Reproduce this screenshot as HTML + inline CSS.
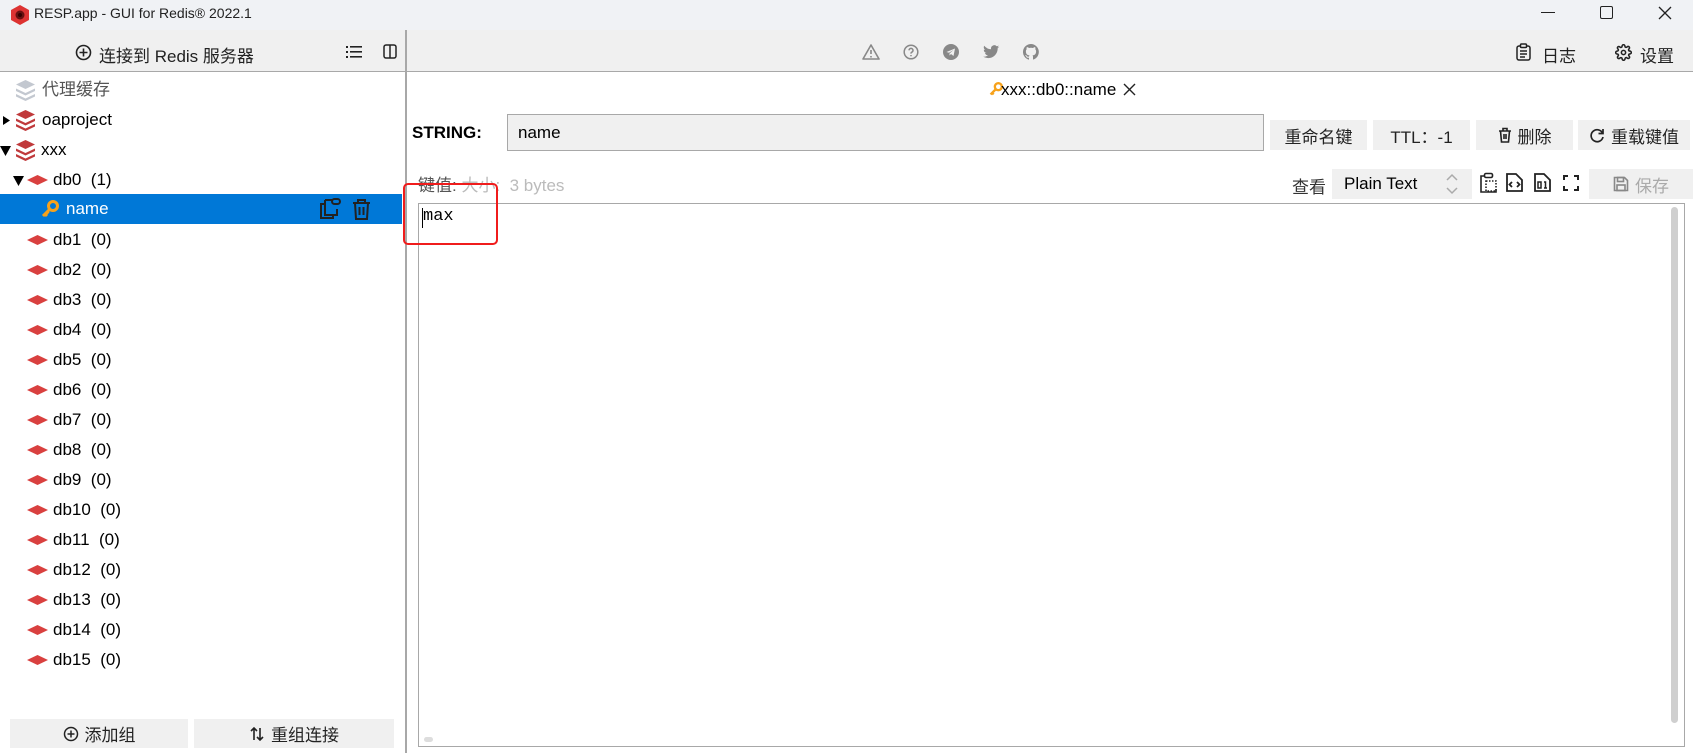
<!DOCTYPE html>
<html><head><meta charset="utf-8">
<style>
*{margin:0;padding:0;box-sizing:border-box}
body{width:1693px;height:753px;overflow:hidden;background:#fff;font-family:"Liberation Sans","Noto Sans CJK SC",sans-serif;color:#000;position:relative}
.a{position:absolute;white-space:nowrap}
.btn{position:absolute;background:#f0f0f0;font-size:17px;color:#222;display:flex;align-items:center;justify-content:center;gap:6px}
.row{position:absolute;left:0;height:30px;width:403px;font-size:17px;line-height:30px}
.gray{color:#777}
</style></head><body>
<!-- title bar -->
<div class="a" style="left:0;top:0;width:1693px;height:30px;background:#f0f2f5"></div>
<svg class="a" style="left:10px;top:4px" width="20" height="22" viewBox="0 0 20 22"><polygon points="10,1 19,6 19,16 10,21 1,16 1,6" fill="#d33"/><circle cx="10" cy="11" r="4.5" fill="#611"/><circle cx="10" cy="11" r="2" fill="#300"/></svg>
<div class="a" style="left:34px;top:5px;font-size:14px;color:#222">RESP.app - GUI for Redis® 2022.1</div>
<div class="a" style="left:1541px;top:12px;width:14px;height:1px;background:#222"></div>
<div class="a" style="left:1600px;top:6px;width:13px;height:13px;border:1.3px solid #222;border-radius:2px"></div>
<svg class="a" style="left:1658px;top:6px" width="14" height="14"><path d="M1 1L13 13M13 1L1 13" stroke="#222" stroke-width="1.3"/></svg>
<!-- toolbar -->
<div class="a" style="left:0;top:30px;width:1693px;height:42px;background:#f0f0f0;border-bottom:1.5px solid #a8a8a8"></div>
<div class="a" style="left:405px;top:30px;width:1.5px;height:723px;background:#a8a8a8"></div>
<svg class="a" style="left:75px;top:44px" width="17" height="17"><circle cx="8.5" cy="8.5" r="7" fill="none" stroke="#222" stroke-width="1.6"/><path d="M8.5 4.5v8M4.5 8.5h8" stroke="#222" stroke-width="1.6"/></svg>
<div class="a" style="left:99px;top:42px;font-size:17px;color:#222">连接到 Redis 服务器</div>
<svg class="a" style="left:346px;top:45px" width="17" height="14"><g fill="#222"><rect x="0" y="1" width="2" height="2"/><rect x="0" y="6" width="2" height="2"/><rect x="0" y="11" width="2" height="2"/><rect x="4" y="1" width="12" height="1.6"/><rect x="4" y="6" width="12" height="1.6"/><rect x="4" y="11" width="12" height="1.6"/></g></svg>
<svg class="a" style="left:383px;top:44px" width="14" height="15"><rect x="1" y="1" width="12" height="13" rx="2" fill="none" stroke="#222" stroke-width="1.5"/><path d="M7 1v13" stroke="#222" stroke-width="1.5"/></svg>
<!-- center icons -->
<svg class="a" style="left:862px;top:43px" width="18" height="17" fill="none" stroke="#888" stroke-width="1.6"><path d="M9 2L17 16H1Z" stroke-linejoin="round"/><path d="M9 7v4M9 13v1.5"/></svg>
<svg class="a" style="left:903px;top:44px" width="16" height="16" fill="none" stroke="#888" stroke-width="1.5"><circle cx="8" cy="8" r="6.8"/><path d="M6 6.3a2 2 0 1 1 2.5 2c-.5.2-.5.6-.5 1.3M8 11v1.3"/></svg>
<svg class="a" style="left:943px;top:44px" width="16" height="16"><circle cx="8" cy="8" r="8" fill="#888"/><path d="M3.5 8L12 4.5 10.5 12 8 10 6.5 11.5V9.5L10.5 6 6 8.8Z" fill="#f0f0f0"/></svg>
<svg class="a" style="left:983px;top:45px" width="17" height="14" viewBox="0 0 24 20"><path d="M23 2.5a9 9 0 0 1-2.7.8A4.7 4.7 0 0 0 22.4.7a9.4 9.4 0 0 1-3 1.1A4.7 4.7 0 0 0 11.4 6 13.4 13.4 0 0 1 1.6 1a4.7 4.7 0 0 0 1.5 6.3A4.7 4.7 0 0 1 1 6.7a4.7 4.7 0 0 0 3.8 4.6 4.7 4.7 0 0 1-2.1.1 4.7 4.7 0 0 0 4.4 3.3A9.5 9.5 0 0 1 0 16.6 13.4 13.4 0 0 0 7.3 18.7c8.7 0 13.5-7.2 13.5-13.5v-.6A9.6 9.6 0 0 0 23 2.5z" fill="#888"/></svg>
<svg class="a" style="left:1023px;top:44px" width="16" height="16" viewBox="0 0 16 16"><path d="M8 0a8 8 0 0 0-2.5 15.6c.4 0 .5-.2.5-.4v-1.5c-2.2.5-2.7-1-2.7-1-.4-.9-.9-1.2-.9-1.2-.7-.5.1-.5.1-.5.8.1 1.2.8 1.2.8.7 1.3 1.9.9 2.3.7.1-.5.3-.9.5-1.1-1.8-.2-3.6-.9-3.6-4 0-.9.3-1.6.8-2.1-.1-.2-.4-1 .1-2.1 0 0 .7-.2 2.2.8a7.5 7.5 0 0 1 4 0c1.5-1 2.2-.8 2.2-.8.4 1.1.2 1.9.1 2.1.5.6.8 1.3.8 2.1 0 3.1-1.9 3.8-3.6 4 .3.3.5.8.5 1.5v2.2c0 .2.1.5.6.4A8 8 0 0 0 8 0z" fill="#888"/></svg>
<svg class="a" style="left:1516px;top:43px" width="15" height="18" fill="none" stroke="#222" stroke-width="1.5"><rect x="1" y="3" width="13" height="14" rx="2"/><rect x="4.5" y="1" width="6" height="3.5" rx="1" fill="#f0f0f0"/><path d="M4 8h7M4 11h7M4 14h5"/></svg>
<div class="a" style="left:1542px;top:42px;font-size:17px;color:#222">日志</div>
<svg class="a" style="left:1615px;top:44px" width="17" height="17" viewBox="0 0 24 24" fill="none" stroke="#222" stroke-width="2.2"><circle cx="12" cy="12" r="3"/><path d="M19.4 15a1.7 1.7 0 0 0 .3 1.8l.1.1a2 2 0 1 1-2.8 2.8l-.1-.1a1.7 1.7 0 0 0-1.8-.3 1.7 1.7 0 0 0-1 1.5V21a2 2 0 1 1-4 0v-.1a1.7 1.7 0 0 0-1.1-1.5 1.7 1.7 0 0 0-1.8.3l-.1.1a2 2 0 1 1-2.8-2.8l.1-.1a1.7 1.7 0 0 0 .3-1.8 1.7 1.7 0 0 0-1.5-1H3a2 2 0 1 1 0-4h.1a1.7 1.7 0 0 0 1.5-1.1 1.7 1.7 0 0 0-.3-1.8l-.1-.1a2 2 0 1 1 2.8-2.8l.1.1a1.7 1.7 0 0 0 1.8.3H9a1.7 1.7 0 0 0 1-1.5V3a2 2 0 1 1 4 0v.1a1.7 1.7 0 0 0 1 1.5 1.7 1.7 0 0 0 1.8-.3l.1-.1a2 2 0 1 1 2.8 2.8l-.1.1a1.7 1.7 0 0 0-.3 1.8V9a1.7 1.7 0 0 0 1.5 1H21a2 2 0 1 1 0 4h-.1a1.7 1.7 0 0 0-1.5 1z"/></svg>
<div class="a" style="left:1640px;top:42px;font-size:17px;color:#222">设置</div>

<!-- tree -->
<svg width="0" height="0" style="position:absolute"><defs>
<g id="stk"><path d="M10.5 1L20 5.5 10.5 10 1 5.5Z"/><path d="M1 9.5l9.5 4.5 9.5-4.5v2.5L10.5 16.5 1 12Z"/><path d="M1 15l9.5 4.5L20 15v2.5L10.5 22 1 17.5Z"/></g>
<g id="db"><path d="M10.5 0L21 5 10.5 10 0 5Z"/></g>
</defs></svg>
<div class="row" style="top:75px"><svg class="a" style="left:15px;top:4px" width="21" height="22" fill="#c3c8d0"><use href="#stk"/></svg><span class="a gray" style="left:42px;color:#555">代理缓存</span></div>
<div class="row" style="top:105px"><svg class="a" style="left:3px;top:11px" width="8" height="9"><path d="M0 0L7 4.5 0 9Z"/></svg><svg class="a" style="left:15px;top:4px" width="21" height="22" fill="#c0393b"><use href="#stk"/></svg><span class="a" style="left:42px">oaproject</span></div>
<div class="row" style="top:135px"><svg class="a" style="left:0;top:11px" width="11" height="10"><path d="M0 0H11L5.5 10Z"/></svg><svg class="a" style="left:15px;top:4px" width="21" height="22" fill="#c0393b"><use href="#stk"/></svg><span class="a" style="left:41px">xxx</span></div>
<div class="row" style="top:165px"><svg class="a" style="left:13px;top:11px" width="11" height="10"><path d="M0 0H11L5.5 10Z"/></svg><svg class="a" style="left:27px;top:10px" width="21" height="10" fill="#d9403f"><use href="#db"/></svg><span class="a" style="left:53px">db0&nbsp; (1)</span></div>
<div class="row" style="top:194px;height:30px;background:#0078d7;width:402px"><svg class="a" style="left:41px;top:6px" width="18" height="18" viewBox="0 0 18 18"><circle cx="12" cy="6" r="4.5" fill="none" stroke="#f7a21b" stroke-width="3"/><path d="M9 9L2 16M4 14l2 2M6 12l1.5 1.5" stroke="#f7a21b" stroke-width="3"/></svg><span class="a" style="left:66px;top:0;color:#fff">name</span>
<svg class="a" style="left:318px;top:4px" width="24" height="22" fill="none" stroke="#222" stroke-width="2"><path d="M7 6H3v14h12v-3"/><path d="M7 2h8M7 2v15h12v-6"/><rect x="14" y="1" width="8" height="5" rx="2.5"/></svg>
<svg class="a" style="left:352px;top:4px" width="19" height="22" fill="none" stroke="#222" stroke-width="2"><path d="M1 5h17M6 5V2h7v3M3 5l1 16h11l1-16M7.5 9v8M11.5 9v8"/></svg></div>
<div id="dbs"></div>
<script>
var h='';for(var i=1;i<=15;i++){var t=180+i*30-15+ (i>=1?30:0);}
</script>
<div class="row" style="top:225px"><svg class="a" style="left:27px;top:10px" width="21" height="10" fill="#d9403f"><use href="#db"/></svg><span class="a" style="left:53px">db1&nbsp; (0)</span></div>
<div class="row" style="top:255px"><svg class="a" style="left:27px;top:10px" width="21" height="10" fill="#d9403f"><use href="#db"/></svg><span class="a" style="left:53px">db2&nbsp; (0)</span></div>
<div class="row" style="top:285px"><svg class="a" style="left:27px;top:10px" width="21" height="10" fill="#d9403f"><use href="#db"/></svg><span class="a" style="left:53px">db3&nbsp; (0)</span></div>
<div class="row" style="top:315px"><svg class="a" style="left:27px;top:10px" width="21" height="10" fill="#d9403f"><use href="#db"/></svg><span class="a" style="left:53px">db4&nbsp; (0)</span></div>
<div class="row" style="top:345px"><svg class="a" style="left:27px;top:10px" width="21" height="10" fill="#d9403f"><use href="#db"/></svg><span class="a" style="left:53px">db5&nbsp; (0)</span></div>
<div class="row" style="top:375px"><svg class="a" style="left:27px;top:10px" width="21" height="10" fill="#d9403f"><use href="#db"/></svg><span class="a" style="left:53px">db6&nbsp; (0)</span></div>
<div class="row" style="top:405px"><svg class="a" style="left:27px;top:10px" width="21" height="10" fill="#d9403f"><use href="#db"/></svg><span class="a" style="left:53px">db7&nbsp; (0)</span></div>
<div class="row" style="top:435px"><svg class="a" style="left:27px;top:10px" width="21" height="10" fill="#d9403f"><use href="#db"/></svg><span class="a" style="left:53px">db8&nbsp; (0)</span></div>
<div class="row" style="top:465px"><svg class="a" style="left:27px;top:10px" width="21" height="10" fill="#d9403f"><use href="#db"/></svg><span class="a" style="left:53px">db9&nbsp; (0)</span></div>
<div class="row" style="top:495px"><svg class="a" style="left:27px;top:10px" width="21" height="10" fill="#d9403f"><use href="#db"/></svg><span class="a" style="left:53px">db10&nbsp; (0)</span></div>
<div class="row" style="top:525px"><svg class="a" style="left:27px;top:10px" width="21" height="10" fill="#d9403f"><use href="#db"/></svg><span class="a" style="left:53px">db11&nbsp; (0)</span></div>
<div class="row" style="top:555px"><svg class="a" style="left:27px;top:10px" width="21" height="10" fill="#d9403f"><use href="#db"/></svg><span class="a" style="left:53px">db12&nbsp; (0)</span></div>
<div class="row" style="top:585px"><svg class="a" style="left:27px;top:10px" width="21" height="10" fill="#d9403f"><use href="#db"/></svg><span class="a" style="left:53px">db13&nbsp; (0)</span></div>
<div class="row" style="top:615px"><svg class="a" style="left:27px;top:10px" width="21" height="10" fill="#d9403f"><use href="#db"/></svg><span class="a" style="left:53px">db14&nbsp; (0)</span></div>
<div class="row" style="top:645px"><svg class="a" style="left:27px;top:10px" width="21" height="10" fill="#d9403f"><use href="#db"/></svg><span class="a" style="left:53px">db15&nbsp; (0)</span></div>

<div class="btn" style="left:10px;top:719px;width:178px;height:29px"><svg width="16" height="16"><circle cx="8" cy="8" r="6.5" fill="none" stroke="#222" stroke-width="1.5"/><path d="M8 4.5v7M4.5 8h7" stroke="#222" stroke-width="1.5"/></svg>添加组</div>
<div class="btn" style="left:194px;top:719px;width:200px;height:29px"><svg width="16" height="16" fill="none" stroke="#222" stroke-width="1.6"><path d="M5 14V2M2 5l3-3 3 3M11 2v12M8 11l3 3 3-3"/></svg>重组连接</div>

<!-- right panel -->
<svg class="a" style="left:989px;top:82px" width="14" height="14" viewBox="0 0 18 18"><circle cx="12" cy="6" r="4.5" fill="none" stroke="#f7a21b" stroke-width="3"/><path d="M9 9L2 16M4 14l2 2" stroke="#f7a21b" stroke-width="3"/></svg>
<div class="a" style="left:1001px;top:80px;font-size:17px">xxx::db0::name</div>
<svg class="a" style="left:1123px;top:83px" width="13" height="13"><path d="M1 1L12 12M12 1L1 12" stroke="#222" stroke-width="1.4"/></svg>

<div class="a" style="left:412px;top:123px;font-size:17px;font-weight:bold">STRING:</div>
<div class="a" style="left:507px;top:114px;width:757px;height:37px;background:#f0f0f0;border:1px solid #a8a8a8;font-size:17px;line-height:35px;padding-left:10px">name</div>
<div class="btn" style="left:1270px;top:120px;width:97px;height:30px">重命名键</div>
<div class="btn" style="left:1373px;top:120px;width:97px;height:30px">TTL：-1</div>
<div class="btn" style="left:1476px;top:120px;width:97px;height:30px"><svg width="14" height="16" fill="none" stroke="#222" stroke-width="1.6"><path d="M1 4h12M5 4V1.5h4V4M2.5 4l1 11h7l1-11M6 7v5M8 7v5"/></svg>删除</div>
<div class="btn" style="left:1578px;top:120px;width:112px;height:30px"><svg width="16" height="16" fill="none" stroke="#222" stroke-width="1.7"><path d="M13.5 6A6 6 0 1 0 14 10"/><path d="M14 2v4.5H9.5"/></svg>重载键值</div>

<div class="a" style="left:418px;top:171px;font-size:17px;color:#555">键值: <span style="color:#bbb">大小:&nbsp; 3 bytes</span></div>
<div class="a" style="left:1292px;top:173px;font-size:17px;color:#333">查看</div>
<div class="a" style="left:1332px;top:169px;width:140px;height:30px;background:#f0f0f0;font-size:17px;line-height:30px;padding-left:12px">Plain Text</div>
<svg class="a" style="left:1445px;top:172px" width="14" height="24" fill="none" stroke="#aaa" stroke-width="1.5"><path d="M2 8l5-5 5 5M2 16l5 5 5-5"/></svg>
<svg class="a" style="left:1478px;top:172px" width="21" height="21" fill="none" stroke="#222" stroke-width="1.6"><path d="M6 4H3v16h15v-3" /><rect x="6.5" y="1.5" width="8" height="4" rx="1.5"/><path d="M8 9h10v10H8Z" stroke-dasharray="1.5 1.5"/></svg>
<svg class="a" style="left:1505px;top:172px" width="19" height="21" fill="none" stroke="#222" stroke-width="1.8"><path d="M2 2h9l6 6v11H2Z"/><path d="M7 10l-2.5 2.5L7 15M12 10l2.5 2.5L12 15"/></svg>
<svg class="a" style="left:1533px;top:172px" width="19" height="21" fill="none" stroke="#222" stroke-width="1.8"><path d="M2 2h9l6 6v11H2Z"/><rect x="5" y="10" width="3" height="6" stroke-width="1.5"/><path d="M11 10h1.5v6M11 16h3" stroke-width="1.5"/></svg>
<svg class="a" style="left:1563px;top:175px" width="16" height="16" fill="none" stroke="#222" stroke-width="2"><path d="M1 5V1h4M11 1h4v4M15 11v4h-4M5 15H1v-4"/></svg>
<div class="btn" style="left:1589px;top:169px;width:104px;height:30px;color:#aaa"><svg width="16" height="16" fill="none" stroke="#888" stroke-width="1.6"><path d="M1.5 1.5h10l3 3v10h-13Z"/><rect x="4.5" y="1.5" width="6" height="4"/><rect x="4" y="9" width="8" height="5.5"/></svg>保存</div>

<div class="a" style="left:418px;top:203px;width:1267px;height:544px;border:1px solid #a8a8a8;background:#fff"></div>
<div class="a" style="left:422px;top:208px;width:1px;height:20px;background:#000"></div>
<div class="a" style="left:423px;top:207px;font-family:'Liberation Mono',monospace;font-size:17px">max</div>
<div class="a" style="left:1671px;top:207px;width:7px;height:516px;background:#cfcfcf;border-radius:4px"></div>
<div class="a" style="left:424px;top:737px;width:9px;height:5px;background:#ddd;border-radius:3px"></div>
<div class="a" style="left:403px;top:183px;width:95px;height:62px;border:2.5px solid #f01c1c;border-radius:5px"></div>
</body></html>
